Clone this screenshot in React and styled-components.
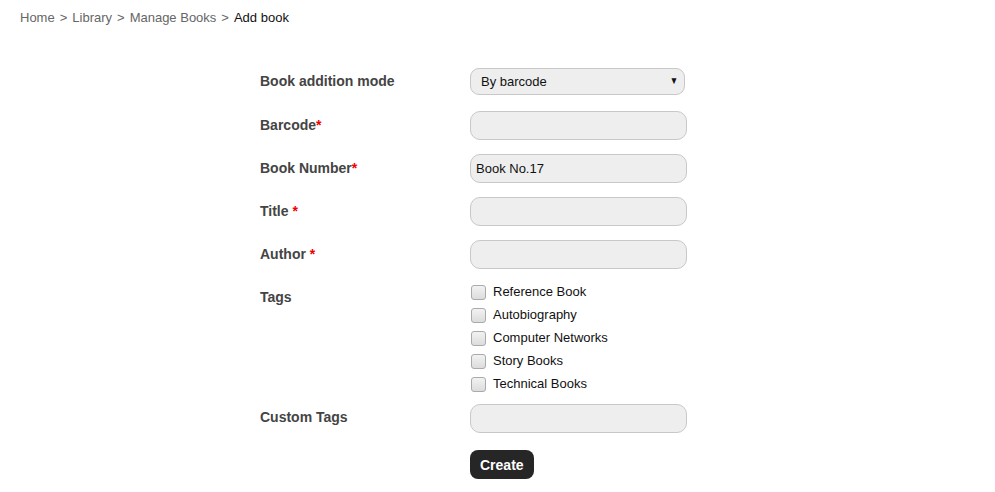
import React from "react";
import styled, { createGlobalStyle } from "styled-components";

const GlobalStyle = createGlobalStyle`
  body {
    margin: 0;
    background: #fff;
    font-family: "Liberation Sans", Arial, sans-serif;
  }
`;

const tags = [
  "Reference Book",
  "Autobiography",
  "Computer Networks",
  "Story Books",
  "Technical Books",
];

const App = () => {
  return (
    <Page>
      <GlobalStyle />
      <Breadcrumb>
        <Crumb>Home</Crumb>
        <Sep>&gt;</Sep>
        <Crumb>Library</Crumb>
        <Sep>&gt;</Sep>
        <Crumb>Manage Books</Crumb>
        <Sep>&gt;</Sep>
        <Current>Add book</Current>
      </Breadcrumb>

      <Form>
        <Row $gap={16}>
          <Label>Book addition mode</Label>
          <SelectBox>
            <span>By barcode</span>
            <Arrow>▼</Arrow>
          </SelectBox>
        </Row>
        <Row $gap={14}>
          <Label>
            Barcode<Req>*</Req>
          </Label>
          <Input />
        </Row>
        <Row $gap={14}>
          <Label>
            Book Number<Req>*</Req>
          </Label>
          <Input defaultValue="Book No.17" />
        </Row>
        <Row $gap={14}>
          <Label>
            Title <Req>*</Req>
          </Label>
          <Input />
        </Row>
        <Row $gap={11}>
          <Label>
            Author <Req>*</Req>
          </Label>
          <Input />
        </Row>
        <Row $gap={9} $top>
          <Label $pad={9}>Tags</Label>
          <TagList>
            {tags.map((t) => (
              <TagItem key={t}>
                <Check type="checkbox" />
                {t}
              </TagItem>
            ))}
          </TagList>
        </Row>
        <Row $gap={17}>
          <Label $lift={4}>Custom Tags</Label>
          <Input />
        </Row>
        <Row>
          <Label />
          <CreateButton>Create</CreateButton>
        </Row>
      </Form>
    </Page>
  );
};

export default App;

const Page = styled.div`
  padding: 10px 20px;
`;

const Breadcrumb = styled.div`
  display: flex;
  align-items: center;
  gap: 5px;
  font-size: 13px;
  line-height: 15px;
`;

const Crumb = styled.a`
  color: #666;
  text-decoration: none;
`;

const Sep = styled.span`
  color: #666;
`;

const Current = styled.span`
  color: #111;
`;

const Form = styled.div`
  margin-top: 43px;
  margin-left: 240px;
`;

const Row = styled.div`
  display: flex;
  align-items: ${(p) => (p.$top ? "flex-start" : "center")};
  margin-bottom: ${(p) => p.$gap || 0}px;
`;

const Label = styled.div`
  width: 210px;
  flex-shrink: 0;
  font-size: 14px;
  line-height: 16px;
  font-weight: bold;
  color: #444;
  padding-top: ${(p) => p.$pad || 0}px;
  padding-bottom: ${(p) => (p.$lift ?? 2)}px;
`;

const Req = styled.span`
  color: #e00;
`;

const SelectBox = styled.div`
  box-sizing: border-box;
  width: 215px;
  height: 27px;
  border: 1px solid #c8c8c8;
  border-radius: 9px;
  background: #eee;
  display: flex;
  align-items: center;
  justify-content: space-between;
  padding: 0 5px 0 10px;
  font-size: 13px;
  color: #111;
`;

const Arrow = styled.span`
  font-size: 10px;
  color: #111;
  transform: scaleX(0.85);
  margin-bottom: 3px;
`;

const Input = styled.input`
  box-sizing: border-box;
  width: 217px;
  height: 29px;
  border: 1px solid #c8c8c8;
  border-radius: 10px;
  background: #eee;
  padding: 0 5px;
  font-family: "Liberation Sans", Arial, sans-serif;
  font-size: 13px;
  color: #111;
  outline: none;
`;

const TagList = styled.div`
  display: flex;
  flex-direction: column;
`;

const TagItem = styled.label`
  display: flex;
  align-items: center;
  height: 23px;
  font-size: 13px;
  color: #111;
`;

const Check = styled.input`
  appearance: none;
  box-sizing: border-box;
  width: 15px;
  height: 15px;
  margin: 1px 7px 0 1px;
  border: 1px solid #aaa;
  border-radius: 3px;
  background: linear-gradient(#f2f2f2, #dcdcdc);
`;

const CreateButton = styled.button`
  height: 29px;
  padding: 0 10px;
  border: none;
  border-radius: 8px;
  background: #262626;
  color: #fff;
  font-family: "Liberation Sans", Arial, sans-serif;
  font-size: 14px;
  font-weight: bold;
`;
